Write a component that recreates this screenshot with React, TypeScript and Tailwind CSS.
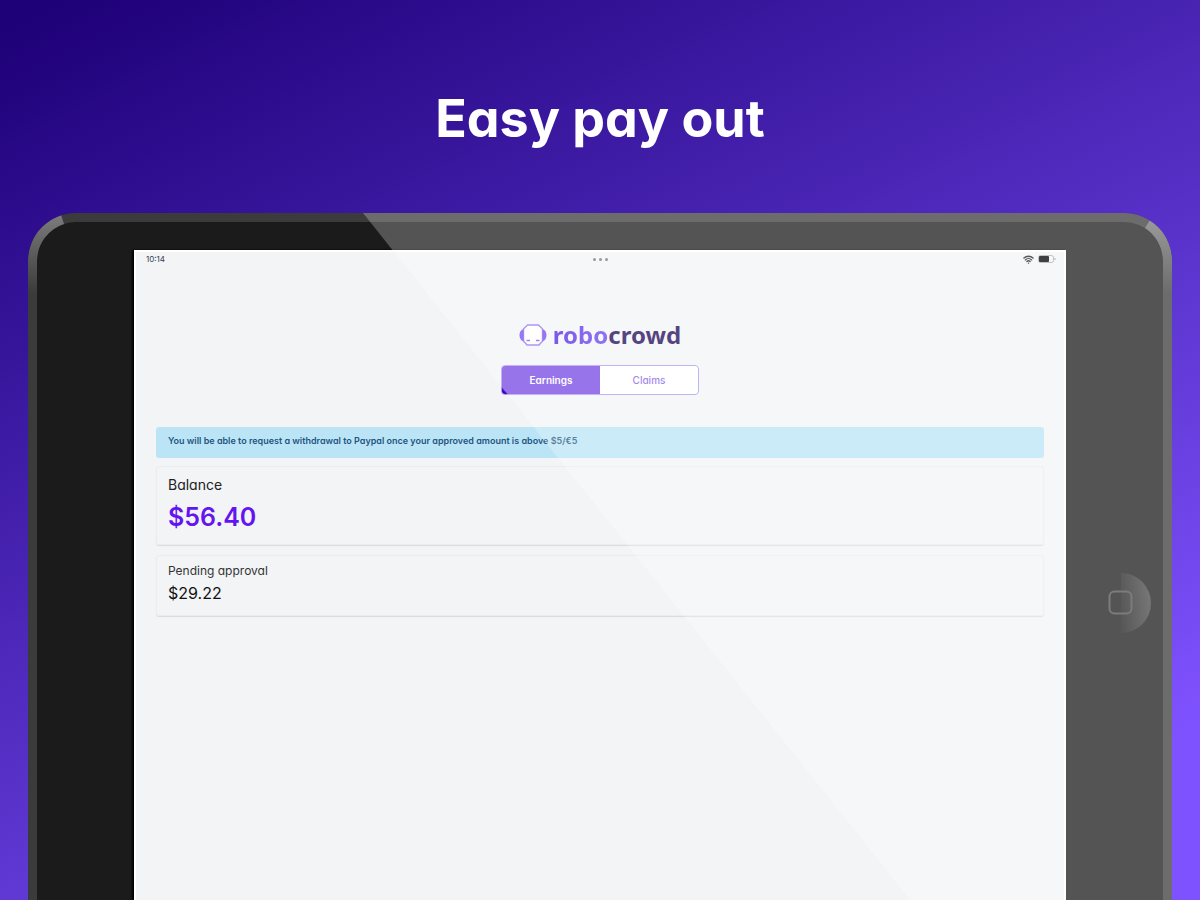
import { Wifi } from 'lucide-react';

function StatusBar() {
  return (
    <div className="flex h-[14px] items-center justify-between px-2 text-[#222]">
      <span className="w-12 pl-[2px] text-[8px] leading-[14px] text-gray-700">10:14</span>
      <div className="flex gap-[3px]">
        {Array.from({ length: 3 }).map((_, i) => (
          <span key={i} className="size-[3px] rounded-full bg-[#777]" />
        ))}
      </div>
      <div className="flex w-12 items-center justify-end gap-1">
        <Wifi className="size-[11px]" strokeWidth={3} />
        <svg className="h-2 w-[18px]" viewBox="0 0 18 8">
          <rect x="0.5" y="0.5" width="15" height="7" rx="2" fill="none" stroke="#999" strokeWidth="0.8" />
          <rect x="1" y="1" width="10" height="6" rx="1" fill="#000" />
          <path d="M17 3v2" stroke="#999" />
        </svg>
      </div>
    </div>
  );
}

function Logo() {
  return (
    <div className="flex h-7 items-center justify-center gap-[6px]">
      <svg className="h-[22px] w-7" viewBox="0 0 28 22" fill="none">
        <path
          d="M8.500 1h11l4 4v12l-3.500 4H8l-3.500-4V5Z"
          fill="#fff"
          stroke="#9273f2"
          strokeWidth="1.400"
          strokeLinejoin="round"
        />
        <path d="M4.500 5C1.800 6 .500 8 .500 11s1.300 5.500 4 6.500ZM23.500 5c2.700 1 4 3 4 6s-1.300 5.500-4 6.500Z" fill="#7448ee" />
        <path d="M7.500 16.500h3.500M17 16.500h3.500" stroke="#7f5af0" strokeWidth="1.500" />
      </svg>
      <span className="font-['Noto_Sans','Open_Sans',sans-serif] text-2xl leading-7 font-bold">
        <span className="bg-linear-to-r from-[#4f1ee0] to-[#6a45f0] bg-clip-text text-transparent">robo</span>
        <span className="text-[#1d0458]">crowd</span>
      </span>
    </div>
  );
}

function Tabs() {
  return (
    <div className="mx-auto mt-4 flex h-[30px] w-[198px] overflow-hidden rounded border border-[#b09af0] bg-white text-[10px]">
      <button className="flex-1 bg-[linear-gradient(45deg,#3a00c8_3px,#7446e3_5px)] font-semibold text-white">
        Earnings
      </button>
      <button className="flex-1 font-medium text-[#8660e6]">Claims</button>
    </div>
  );
}

function Screen() {
  return (
    <div className="flex-1 border-2 border-b-0 border-white bg-[#f2f4f6] shadow-[-2px_0_2px_#000]">
      <StatusBar />
      <div className="px-5 pt-[55px]">
        <Logo />
        <Tabs />
        <p className="mt-8 rounded-[3px] bg-[#bbe5f6] px-3 pt-[6px] pb-[9px] text-[9px] leading-4 font-semibold text-[#1f5580]">
          You will be able to request a withdrawal to Paypal once your approved amount is above $5/€5
        </p>
        <section className="mt-2 rounded-[3px] border border-[#eaecef] px-[11px] pt-2 pb-[9px] shadow-[0_1px_1px_#d9dbde]">
          <h2 className="text-sm leading-5 text-[#222]">Balance</h2>
          <p className="pt-1 text-[25px] leading-9 font-semibold text-[#6414f0]">$56.40</p>
        </section>
        <section className="mt-[10px] rounded-[3px] border border-[#eaecef] px-[11px] pt-[7px] pb-[10px] shadow-[0_1px_1px_#d9dbde]">
          <h2 className="text-xs leading-4 text-[#333]">Pending approval</h2>
          <p className="pt-[2px] text-base leading-6 text-[#111]">$29.22</p>
        </section>
      </div>
    </div>
  );
}

function HomeButton() {
  return (
    <button aria-label="Home" className="mt-[323px] mr-3 size-[60px]">
      <svg viewBox="0 0 60 60" fill="none">
        <defs>
          <linearGradient id="home" x1="0" x2="1" y1="0.6" y2="0.4">
            <stop offset="0" stopColor="#585858" />
            <stop offset="1" stopColor="#777" />
          </linearGradient>
        </defs>
        <path d="M30 0a30 30 0 0 1 0 60Z" fill="url(#home)" />
        <rect x="18.500" y="18.500" width="22" height="22" rx="5" stroke="#7c7c7c" strokeWidth="2" />
      </svg>
    </button>
  );
}

function Tablet() {
  return (
    <div className="relative mx-7 flex flex-1 overflow-hidden rounded-t-[48px] bg-[#3a3b3a] px-[9px] pt-[9px]">
      <div className="flex flex-1 rounded-t-[39px] bg-[#1b1b1b] pt-7">
        <div className="w-[97px]" />
        <Screen />
        <div className="w-[97px]" />
      </div>

      {/* diagonal glass reflection */}
      <div className="pointer-events-none absolute inset-0 bg-white/25 [clip-path:polygon(335px_0,100%_0,100%_100%,882px_100%)]" />

      <div className="absolute top-[37px] right-[9px] flex w-[97px] justify-end">
        <HomeButton />
      </div>

      {/* lit corners of the frame */}
      <svg className="absolute top-0 left-0 h-20 w-12" viewBox="0 0 48 80">
        <defs>
          <linearGradient id="lit-left" x1="0" x2="0" y1="0" y2="1">
            <stop offset="0" stopColor="#7c7c7c" />
            <stop offset="1" stopColor="#3a3b3a" />
          </linearGradient>
        </defs>
        <path d="M0 48A48 48 0 0 1 33 2L36 11A39 39 0 0 0 9 48V80H0Z" fill="url(#lit-left)" />
      </svg>
      <svg className="absolute top-0 right-0 h-20 w-12" viewBox="0 0 48 80">
        <defs>
          <linearGradient id="lit-right" x1="0" x2="0" y1="0" y2="1">
            <stop offset="0" stopColor="#9a9a9a" />
            <stop offset="1" stopColor="#6b6c6b" />
          </linearGradient>
        </defs>
        <path d="M48 48A48 48 0 0 0 26 7L21 15A39 39 0 0 1 39 48V80H48Z" fill="url(#lit-right)" />
      </svg>
    </div>
  );
}

export default function App() {
  return (
    <main className="flex min-h-screen flex-col bg-[linear-gradient(154deg,#1e0078_2%,#7f52ff_88%)] font-['Inter',sans-serif] [font-feature-settings:'cv11','ss03']">
      <h1 className="pt-[85px] pb-[60px] text-center text-[52px] leading-[68px] font-bold text-white">Easy pay out</h1>
      <Tablet />
    </main>
  );
}
